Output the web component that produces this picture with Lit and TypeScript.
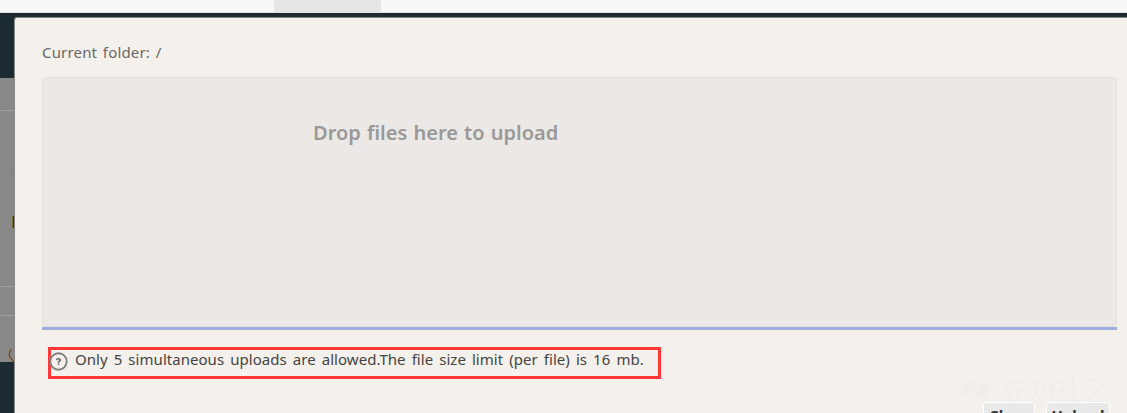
import { LitElement, html, css } from "lit";
import { customElement } from "lit/decorators.js";

@customElement("app-root")
export class AppRoot extends LitElement {
  static styles = css`
    :host { display: block; height: 413px; overflow: hidden; font-family: "Noto Sans", sans-serif; background: #1c2b31; }
    * { box-sizing: border-box; }
    .page { height: 413px; display: flex; flex-direction: column; position: relative; }
    .topbar { height: 13px; flex: none; background: #f8f8f8; border-bottom: 1px solid #e4e4e4; padding-left: 274px; }
    .tab { width: 107px; height: 12px; background: #e6e6e6; }
    .main { flex: 1; display: flex; min-height: 0; }
    .side { width: 14px; flex: none; padding-top: 65px; }
    .strip { height: 284px; background: #888; display: grid; grid-template-rows: 33px 176px 29px 46px; overflow: hidden; }
    .cell { border-bottom: 1px solid #a0a0a0; }
    .cell:last-child { border-bottom: 0; }
    .strip svg { display: block; }
    .dialog { flex: 1; min-width: 0; margin-top: 4px; background: #f4f0eb; border-top: 1px solid #858585; border-left: 1px solid #858585; border-top-left-radius: 3px; padding: 23px 10px 0 27px; display: flex; flex-direction: column; }
    .folder { height: 22px; flex: none; line-height: 22px; font-size: 15px; color: #686868; white-space: pre; letter-spacing: 0.17px; word-spacing: 1.6px; }
    .drop { margin-top: 14px; height: 250px; flex: none; background: #ece8e5; border: 1px solid #e4e1dd; border-radius: 4px; padding: 40px 0 0 270px; font-size: 20px; line-height: 30px; font-weight: 600; color: #999; white-space: nowrap; word-spacing: 1px; }
    .bar { height: 3px; flex: none; background: #a0abe1; }
    .note { margin: 17px 0 0 6px; width: 613px; height: 32px; flex: none; border: 3px solid #ff3737; display: flex; white-space: nowrap; font-size: 15px; line-height: 18px; color: #444; letter-spacing: 0.04px; word-spacing: 2.1px; }
    .note svg { flex: none; margin: 1px 5px 0 -2px; }
    .mark { height: 23px; flex: none; display: flex; justify-content: flex-end; padding-right: 8px; font-family: "Noto Sans CJK SC", sans-serif; color: #f0ede8; font-size: 27px; line-height: 21px; font-weight: 300; }
    .mark svg { margin: 1px 12px 0 0; }
    .buttons { display: flex; justify-content: flex-end; gap: 11px; padding-right: 7px; }
    .btn { height: 30px; border: 1px solid #fff; border-radius: 3px; background: #e8e9e8; color: #333; font-size: 15px; line-height: 25px; font-weight: 700; text-align: center; }
    .close { width: 52px; }
    .upload { width: 64px; }
  `;

  render() {
    return html`<div class="page">
      <div class="topbar"><div class="tab"></div></div>
      <div class="main">
        <div class="side"><div class="strip">
          <div class="cell"></div>
          <div class="cell"><svg width="14" height="170"><path d="M14 54L9 59L14 65Z" fill="#838383"/><path d="M12.5 105V117" stroke="#796b30"/><path d="M13.5 105V117" stroke="#34343c"/></svg></div>
          <div class="cell"></div>
          <div class="cell"><svg width="14" height="46"><path d="M11.5 33Q8 38 10 41L13.5 46" fill="none" stroke="#755326" stroke-width="1.4"/></svg></div>
        </div></div>
        <div class="dialog">
          <div class="folder"><span>Current folder: /</span></div>
          <div class="drop"><span>Drop files here to upload</span></div>
          <div class="bar"></div>
          <div class="note"><svg width="21" height="21" viewBox="0 0 21 21"><circle cx="9.5" cy="10.5" r="8.2" fill="none" stroke="#808080" stroke-width="1.9"/><path d="M7.6 9.2Q7.7 7.8 9.5 7.8Q11.4 7.8 11.3 9.2Q11.2 10.1 9.6 10.8V11.8M9.6 12.6V14" fill="none" stroke="#6c6c6c" stroke-width="1.6"/></svg><span>Only 5 simultaneous uploads are allowed.The file size limit (per file) is 16 mb.</span></div>
          <div class="mark"><svg width="27" height="20"><path d="M0 2H17L4 18H0ZM20 2H27V18H10Z" fill="#f1ede8"/></svg>先知社区</div>
          <div class="buttons"><div class="btn close">Close</div><div class="btn upload">Upload</div></div>
        </div>
      </div>
    </div>`;
  }
}
